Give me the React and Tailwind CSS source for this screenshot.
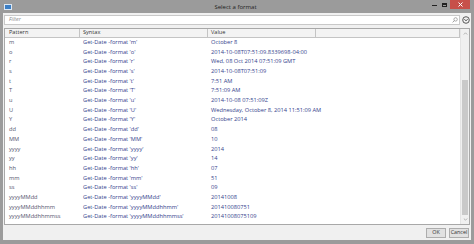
import React from 'react';

const rows = [
  ['m', "Get-Date -format 'm'", 'October 8'],
  ['o', "Get-Date -format 'o'", '2014-10-08T07:51:09.8339698-04:00'],
  ['r', "Get-Date -format 'r'", 'Wed, 08 Oct 2014 07:51:09 GMT'],
  ['s', "Get-Date -format 's'", '2014-10-08T07:51:09'],
  ['t', "Get-Date -format 't'", '7:51 AM'],
  ['T', "Get-Date -format 'T'", '7:51:09 AM'],
  ['u', "Get-Date -format 'u'", '2014-10-08 07:51:09Z'],
  ['U', "Get-Date -format 'U'", 'Wednesday, October 8, 2014 11:51:09 AM'],
  ['Y', "Get-Date -format 'Y'", 'October 2014'],
  ['dd', "Get-Date -format 'dd'", '08'],
  ['MM', "Get-Date -format 'MM'", '10'],
  ['yyyy', "Get-Date -format 'yyyy'", '2014'],
  ['yy', "Get-Date -format 'yy'", '14'],
  ['hh', "Get-Date -format 'hh'", '07'],
  ['mm', "Get-Date -format 'mm'", '51'],
  ['ss', "Get-Date -format 'ss'", '09'],
  ['yyyyMMdd', "Get-Date -format 'yyyyMMdd'", '20141008'],
  ['yyyyMMddhhmm', "Get-Date -format 'yyyyMMddhhmm'", '201410080751'],
  ['yyyyMMddhhmmss', "Get-Date -format 'yyyyMMddhhmmss'", '20141008075109'],
];

const App = () => {
  return (
    <div
      className="w-[474px] h-[244px] bg-[#9b9b9b] flex flex-col overflow-hidden"
      style={{ fontFamily: '"Open Sans", "Noto Sans", sans-serif' }}
    >
      {/* Title bar */}
      <div className="h-[13px] flex items-center relative shrink-0">
        <div className="ml-[4px] w-[8px] h-[6px] bg-[#3d7fc4] border border-[#dbe8f5]" />
        <div className="flex-1 text-center text-[6px] text-[#1e1e1e] leading-none pl-[30px]">Select a format</div>
        <div className="flex items-start h-full">
          <div className="w-[10px] h-[9px] flex items-center justify-center">
            <div className="w-[5px] h-[1px] bg-[#222] mt-[2px]" />
          </div>
          <div className="w-[10px] h-[9px] flex items-center justify-center">
            <div className="w-[5px] h-[4px] border border-[#222] border-t-2" />
          </div>
          <div className="w-[20px] h-[9px] bg-[#c7504a] flex items-center justify-center mr-[4px] ml-[1px]">
            <svg width="5" height="5" viewBox="0 0 5 5">
              <path d="M0.5 0.5 L4.5 4.5 M4.5 0.5 L0.5 4.5" stroke="white" strokeWidth="1" />
            </svg>
          </div>
        </div>
      </div>

      {/* Body */}
      <div className="flex-1 mx-[3px] bg-[#f0f0f0] flex flex-col">
        {/* Filter */}
        <div className="flex items-center h-[12px] mt-[1px] px-[1px] gap-[1px]">
          <div className="flex-1 h-[10px] bg-white border border-[#c8c8c8] flex items-center justify-between pl-[4px] pr-[1px]">
            <span className="text-[5.4px] italic text-[#8a8a8a] leading-none">Filter</span>
            <svg width="6" height="6" viewBox="0 0 6 6">
              <circle cx="3.6" cy="2.4" r="1.7" fill="none" stroke="#8a8a8a" strokeWidth="0.7" />
              <path d="M2.4 3.6 L0.6 5.4" stroke="#8a8a8a" strokeWidth="0.8" />
            </svg>
          </div>
          <div className="w-[9px] h-[9px] flex items-center justify-center">
            <svg width="8" height="8" viewBox="0 0 8 8">
              <circle cx="4" cy="4" r="3.3" fill="none" stroke="#333" strokeWidth="0.8" />
              <path d="M2.4 3.2 L4 4.8 L5.6 3.2" fill="none" stroke="#333" strokeWidth="0.9" />
            </svg>
          </div>
        </div>

        {/* Grid */}
        <div className="mt-[2px] ml-[1px] mr-[1px] h-[197px] bg-white border border-[#a8a8a8] flex">
          <div className="flex-1 flex flex-col">
            <div className="h-[9px] flex bg-[#f3f3f3] border-b border-[#c4c4c4] text-[5.6px] text-[#333] leading-none">
              <div className="w-[75px] flex items-center pl-[4px] border-r border-[#c4c4c4]">Pattern</div>
              <div className="w-[128px] flex items-center pl-[3px] border-r border-[#c4c4c4]">Syntax</div>
              <div className="w-[108px] flex items-center pl-[3px] border-r border-[#c4c4c4]">Value</div>
              <div className="flex-1 border-r border-[#c4c4c4]" />
            </div>
            <div className="flex flex-col text-[5.7px] leading-none">
              {rows.map((r, i) => (
                <div key={i} className="h-[9.7px] flex items-center">
                  <div className="w-[75px] pl-[4px] text-[#55556e]">{r[0]}</div>
                  <div className="w-[128px] pl-[3px] text-[#34428c] whitespace-nowrap">{r[1]}</div>
                  <div className="w-[108px] pl-[3px] text-[#34428c] whitespace-nowrap">{r[2]}</div>
                </div>
              ))}
            </div>
          </div>
          {/* Scrollbar */}
          <div className="w-[9px] bg-[#f0f0f0] border-l border-[#e4e4e4] flex flex-col">
            <div className="h-[9px] flex items-center justify-center">
              <svg width="5" height="3" viewBox="0 0 5 3">
                <path d="M0.8 2.5 L2.5 0.8 L4.2 2.5" fill="none" stroke="#9a9a9a" strokeWidth="0.7" />
              </svg>
            </div>
            <div className="h-[42px]" />
            <div className="flex-1 mx-[1px] bg-[#c9c9c9]" />
            <div className="h-[9px] flex items-center justify-center">
              <svg width="5" height="3" viewBox="0 0 5 3">
                <path d="M0.8 0.5 L2.5 2.2 L4.2 0.5" fill="none" stroke="#9a9a9a" strokeWidth="0.7" />
              </svg>
            </div>
          </div>
        </div>

        {/* Footer */}
        <div className="flex-1 flex items-center justify-end gap-[3px] pr-[2px]">
          <button className="w-[20px] h-[10px] bg-[#e1e1e1] border border-[#adadad] text-[5.4px] text-[#333] leading-none">OK</button>
          <button className="w-[20px] h-[10px] bg-[#e1e1e1] border border-[#adadad] text-[5.4px] text-[#333] leading-none">Cancel</button>
        </div>
      </div>
      <div className="h-[4px] shrink-0" />
    </div>
  );
};

export default App;
